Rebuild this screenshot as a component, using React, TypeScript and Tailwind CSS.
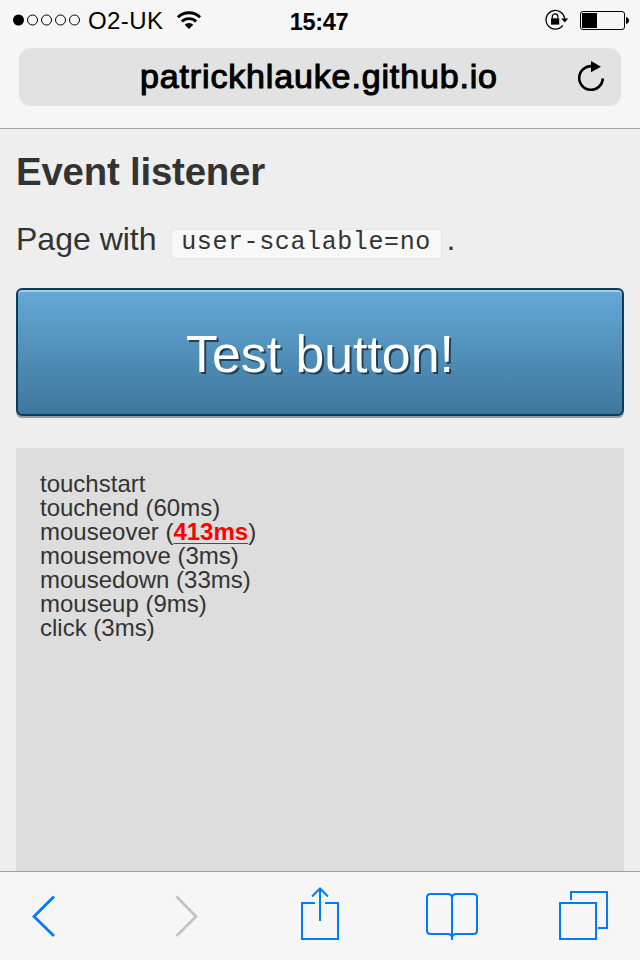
import React from "react";

const events: { name: string; delay?: string; slow?: boolean }[] = [
  { name: "touchstart" },
  { name: "touchend", delay: "60ms" },
  { name: "mouseover", delay: "413ms", slow: true },
  { name: "mousemove", delay: "3ms" },
  { name: "mousedown", delay: "33ms" },
  { name: "mouseup", delay: "9ms" },
  { name: "click", delay: "3ms" },
];

function SignalDots() {
  return (
    <svg width="68" height="12" viewBox="0 0 68 12" fill="none" stroke="#000" strokeWidth="1">
      <circle cx="5.5" cy="6" r="5.5" fill="#000" stroke="none" />
      <circle cx="19.5" cy="6" r="5" />
      <circle cx="33.5" cy="6" r="5" />
      <circle cx="47.5" cy="6" r="5" />
      <circle cx="61.5" cy="6" r="5" />
    </svg>
  );
}

function Wifi() {
  return (
    <svg width="26" height="20" viewBox="0 0 26 20" fill="none" stroke="#000" strokeWidth="2.9">
      <path d="M1.9 7.2a16 16 0 0 1 22.200 0" />
      <path d="M5.900 11.500a10.200 10.200 0 0 1 14.200 0" />
      <path d="M13 19 8.700 14.800a6 6 0 0 1 8.600 0z" fill="#000" stroke="none" />
    </svg>
  );
}

function RotationLock() {
  return (
    <svg width="24" height="22" viewBox="0 0 24 22" fill="none" stroke="#000">
      <path d="M17.800 16.300A9.300 9.300 0 1 1 19.600 10" strokeWidth="1.300" />
      <path d="M16.200 9.400h7l-3.400 4z" fill="#000" stroke="none" />
      <rect x="6" y="9.300" width="8.200" height="6.300" fill="#000" stroke="none" />
      <path d="M7.300 9.500V7.600a2.800 2.800 0 0 1 5.600 0v1.900" strokeWidth="1.200" />
    </svg>
  );
}

function Battery() {
  return (
    <svg width="49" height="19" viewBox="0 0 49 19" fill="none">
      <rect x="0.5" y="0.5" width="44" height="18" rx="2.5" stroke="#000" />
      <rect x="2" y="2" width="15" height="15" fill="#000" />
      <path d="M46 6c1.800.4 3 1.800 3 3.500S47.800 12.600 46 13z" fill="#000" />
    </svg>
  );
}

function Reload() {
  return (
    <svg width="30" height="32" viewBox="0 0 30 32" fill="none">
      <path d="M16 5.200A11.800 11.800 0 1 0 26.800 17.400" stroke="#000" strokeWidth="2.600" />
      <path d="M15 0v11.300l10-5.600z" fill="#000" />
    </svg>
  );
}

export default function App() {
  return (
    <div className="flex h-[960px] w-[640px] flex-col overflow-hidden bg-[#eee] font-['Liberation_Sans',Arial,sans-serif] text-[#333]">
      <header className="flex h-[129px] shrink-0 flex-col border-b border-[#a7a7a7] bg-[#f6f6f6] px-[19px] text-black">
        <div className="grid h-12 grid-cols-3">
          <div className="-ml-1.5 flex h-10 items-center">
            <SignalDots />
            <span className="ml-[7px] mt-[2px] text-[24px] leading-none tracking-[0.4px]">O2-UK</span>
            <span className="ml-[13px]">
              <Wifi />
            </span>
          </div>
          <div className="flex h-[46px] items-center justify-center pr-[2px] text-[23.500px] font-bold leading-none tracking-[-0.350px]">
            15:47
          </div>
          <div className="-mr-[11px] flex h-10 items-center justify-end gap-3">
            <RotationLock />
            <span className="-ml-px mr-[3px]">
              <Battery />
            </span>
          </div>
        </div>
        <div className="flex h-[58px] items-center rounded-[12px] bg-[#e2e2e2] pl-[121px] pr-[15px]">
          <span className="flex-1 whitespace-nowrap text-[34px] leading-[58px] tracking-[0.850px] [-webkit-text-stroke:1.1px_#000]">
            <span className="block h-[58px] leading-[56px]">patrickhlauke.github.io</span>
          </span>
          <Reload />
        </div>
      </header>

      <main className="flex min-h-0 flex-1 flex-col px-4">
        <h1 className="mt-[22px] h-10 text-[38.400px] font-bold leading-[41px] tracking-[-0.200px]">Event listener</h1>
        <p className="mt-7 flex h-10 items-center whitespace-nowrap text-[32px] leading-10">
          Page with
          <code className="ml-[13px] mt-[9px] flex h-8 w-[273px] items-center justify-center rounded-[6px] border-2 border-[#eaeaea] bg-[#f8f8f8] pb-[3px] font-['Liberation_Mono','Courier_New',monospace] text-[25px] leading-none tracking-[0.600px]">
            user-scalable=no
          </code>
          <span className="ml-1">.</span>
        </p>
        <button className="mt-[29px] h-32 w-full shrink-0 rounded-[6px] border-2 border-[#0a3c59] bg-linear-to-b from-[#65a9d7] to-[#3e779d] pt-1.5 text-[51.800px] leading-none text-white shadow-[0_2px_0_#999,inset_0_2px_0_#a4cce8] [text-shadow:2px_2px_0_#1e4158]">
          Test button!
        </button>
        <div className="mt-8 flex-1 bg-[#ddd] p-6 text-[24px] leading-6">
          {events.map((event) => (
            <div key={event.name}>
              {event.name}
              {event.delay && (
                <>
                  {" ("}
                  {event.slow ? (
                    <b className="text-[#f00] underline decoration-1 underline-offset-[3px] [text-decoration-skip-ink:none]">
                      {event.delay}
                    </b>
                  ) : (
                    event.delay
                  )}
                  )
                </>
              )}
            </div>
          ))}
        </div>
      </main>

      <footer className="flex h-[89px] shrink-0 items-start border-t border-[#a0a0a0] bg-[#f6f6f6] pl-8 pt-[15px]">
        <svg className="mt-2" width="23" height="42" viewBox="0 0 23 42" fill="none" stroke="#007aff" strokeWidth="2.800">
          <path d="M22 1.500 2 21.500l20 19.500" />
        </svg>
        <svg className="ml-[120px] mt-2" width="23" height="42" viewBox="0 0 23 42" fill="none" stroke="#c4c4c4" strokeWidth="2.800">
          <path d="M1.500 1.500 21 21.500 1.500 41" />
        </svg>
        <svg className="ml-[103px]" width="38" height="54" viewBox="0 0 38 54" fill="none" stroke="#007aff" strokeWidth="2">
          <path d="M14 16H1v36h36V16H24" />
          <path d="M19 34V2M11 9.500 19 1.500l8 8" />
        </svg>
        <svg className="ml-[87px]" width="52" height="54" viewBox="0 0 52 54" fill="none" stroke="#007aff" strokeWidth="2">
          <path d="M26 53V11c0-2.500-2-4-4.500-4H4.500C2.500 7 1 8.500 1 10.500v33C1 45.500 2.500 47 4.500 47h17c2.500 0 4.500 1.500 4.500 4" />
          <path d="M26 11c0-2.500 2-4 4.500-4h17c2 0 3.500 1.500 3.500 3.500v33c0 2-1.500 3.500-3.500 3.500h-17c-2.500 0-4.500 1.500-4.500 4" />
        </svg>
        <svg className="ml-[81px]" width="50" height="54" viewBox="0 0 50 54" fill="none" stroke="#007aff" strokeWidth="2">
          <rect x="1" y="16" width="36" height="36" />
          <path d="M12 13V5h36v36h-9" />
        </svg>
      </footer>
    </div>
  );
}
